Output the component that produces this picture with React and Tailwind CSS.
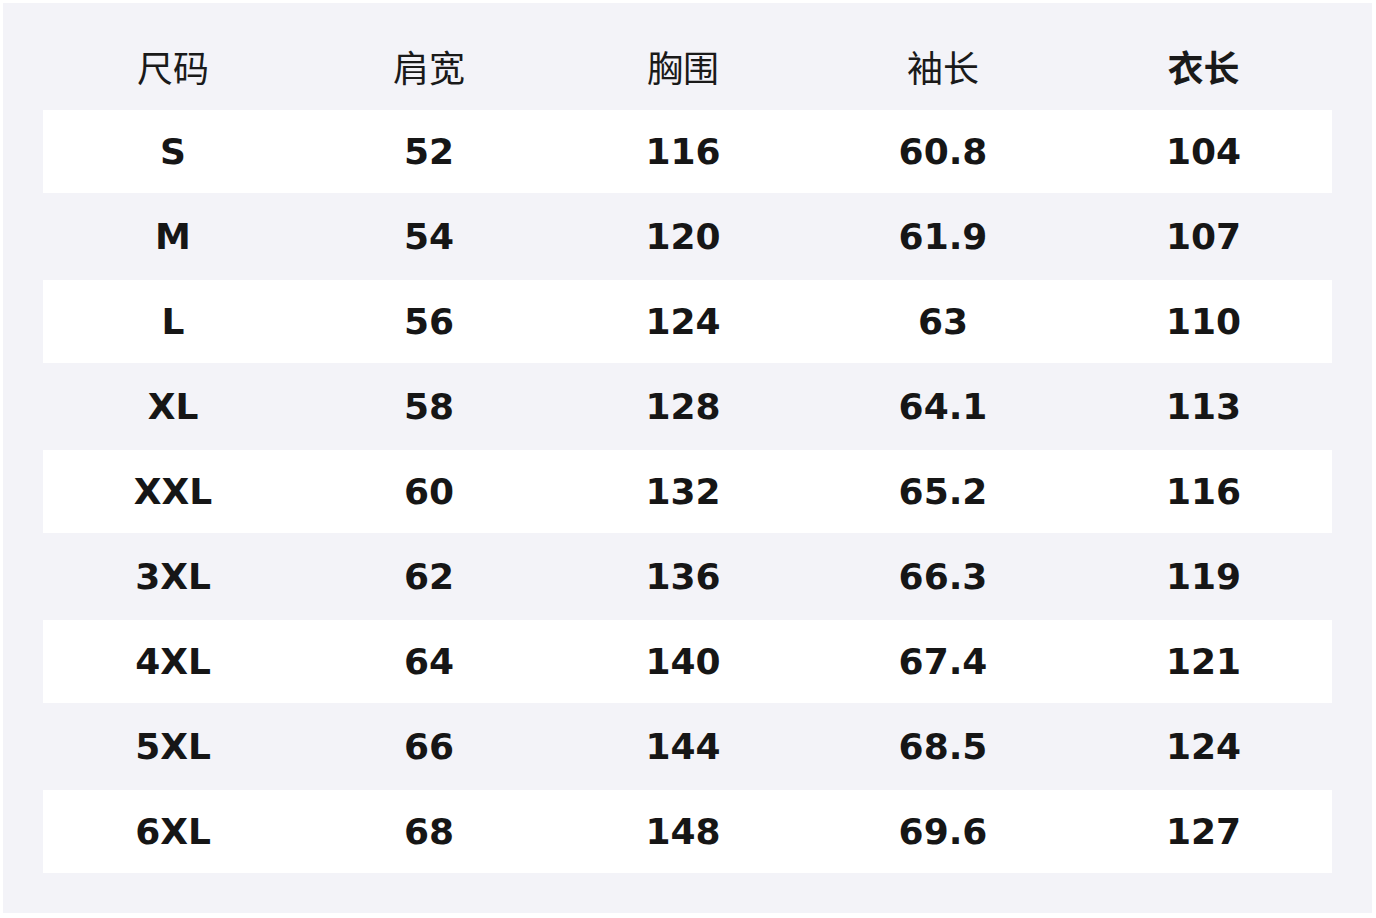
import React from "react";

const headers = ["尺码", "肩宽", "胸围", "袖长", "衣长"];
const rows = [
  ["S", "52", "116", "60.8", "104"],
  ["M", "54", "120", "61.9", "107"],
  ["L", "56", "124", "63", "110"],
  ["XL", "58", "128", "64.1", "113"],
  ["XXL", "60", "132", "65.2", "116"],
  ["3XL", "62", "136", "66.3", "119"],
  ["4XL", "64", "140", "67.4", "121"],
  ["5XL", "66", "144", "68.5", "124"],
  ["6XL", "68", "148", "69.6", "127"],
];

export default function App() {
  return (
    <div className="w-[1376px] h-[918px] bg-white pt-[3px] pl-[3px]">
      <div className="w-[1369px] h-[910px] bg-[#f3f3f8] px-[40px] pt-[22px] pb-[40px]">
        <div className="grid grid-cols-[260px_252px_256px_264px_257px] h-[85px] items-center text-[#1a1a1a] text-[36px] pb-[4px]" style={{ fontFamily: '"Noto Sans CJK SC", sans-serif' }}>
          {headers.map((h, i) => (
            <div key={h} className={"text-center leading-none " + (i === 4 ? "font-bold" : "font-normal")}>
              {h}
            </div>
          ))}
        </div>
        {rows.map((r, ri) => (
          <div
            key={r[0]}
            className={
              "grid grid-cols-[260px_252px_256px_264px_257px] items-center text-[#161616] text-[36px] font-bold " +
              (ri % 2 === 0 ? "bg-white h-[83px]" : "h-[87px]")
            }
            style={{ fontFamily: '"DejaVu Sans", sans-serif' }}
          >
            {r.map((c, ci) => (
              <div key={ci} className="text-center leading-none">
                {c}
              </div>
            ))}
          </div>
        ))}
      </div>
    </div>
  );
}
